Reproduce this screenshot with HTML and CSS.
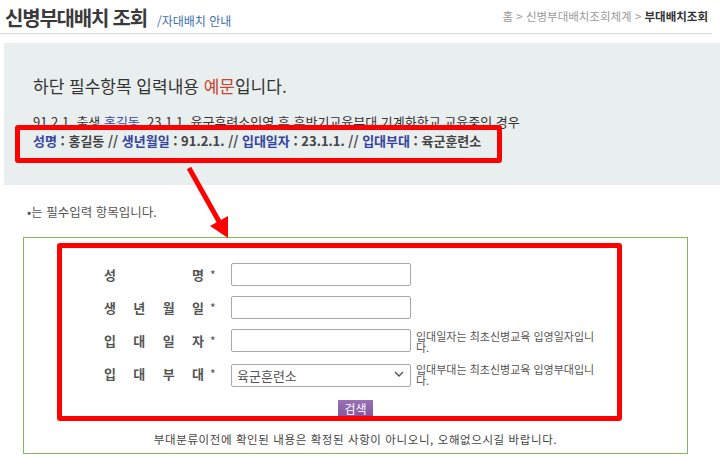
FILE: index.html
```html
<!DOCTYPE html>
<html lang="ko">
<head>
<meta charset="utf-8">
<title>신병부대배치 조회</title>
<link rel="stylesheet" href="styles.css">
</head>
<body>
<header class="top">
  <div class="title-group">
    <h1 class="title">신병부대배치 조회</h1>
    <span class="subtitle">/자대배치 안내</span>
  </div>
  <nav class="crumbs">홈 &gt; 신병부대배치조회체계 &gt; <b>부대배치조회</b></nav>
</header>

<section class="example">
  <p class="ex-title">하단 필수항목 입력내용 <span class="red">예문</span>입니다.</p>
  <p class="ex-line">91.2.1. 출생 <span class="ul"><span class="blue">홍길동</span>, 23.1.1. 육군훈련소입영</span> 후 후반기교육부대 기계화학교 교육중인 경우</p>
  <p class="ex-line ex-bold"><span class="lab">성명</span> : 홍길동 // <span class="lab">생년월일</span> : 91.2.1. // <span class="lab">입대일자</span> : 23.1.1. // <span class="lab">입대부대</span> : 육군훈련소</p>
</section>

<p class="note">•는 필수입력 항목입니다.</p>

<section class="formbox">
  <div class="row">
    <div class="label"><span>성</span><span>명</span></div>
    <span class="star">*</span>
    <input class="field" type="text">
  </div>
  <div class="row">
    <div class="label"><span>생</span><span>년</span><span>월</span><span>일</span></div>
    <span class="star">*</span>
    <input class="field" type="text">
  </div>
  <div class="row">
    <div class="label"><span>입</span><span>대</span><span>일</span><span>자</span></div>
    <span class="star">*</span>
    <input class="field" type="text">
    <p class="help">입대일자는 최초신병교육 입영일자입니다.</p>
  </div>
  <div class="row">
    <div class="label"><span>입</span><span>대</span><span>부</span><span>대</span></div>
    <span class="star">*</span>
    <div class="selwrap">
      <select class="field sel"><option>육군훈련소</option></select>
      <svg class="chev" width="10" height="6" viewBox="0 0 10 6"><path d="M1 1 L5 5 L9 1" fill="none" stroke="#555" stroke-width="1.4"/></svg>
    </div>
    <p class="help">입대부대는 최초신병교육 입영부대입니다.</p>
  </div>
  <div class="btnrow"><button class="btn" type="button">검색</button></div>
  <p class="foot">부대분류이전에 확인된 내용은 확정된 사항이 아니오니, 오해없으시길 바랍니다.</p>
</section>

<div class="mark mark-1"></div>
<div class="mark mark-2"></div>
<svg class="arrow" width="720" height="466" viewBox="0 0 720 466">
  <line x1="189" y1="168" x2="221" y2="225" stroke="#f00" stroke-width="5"/>
  <polygon points="228,238 210,226 228,216" fill="#f00"/>
</svg>
</body>
</html>
```

FILE: styles.css
```css
* { box-sizing: border-box; }

body {
  margin: 0;
  position: relative;
  width: 720px;
  height: 466px;
  overflow: hidden;
  background: #fff;
  font-family: "Noto Sans CJK KR", "Noto Sans", sans-serif;
  color: #333;
}

p { margin: 0; }

.top {
  display: flex;
  justify-content: space-between;
  align-items: center;
  width: 712px;
  height: 34px;
  padding: 2px 4px 0 5px;
  border-bottom: 1px solid #dedede;
  box-shadow: 0 1px 1px rgba(0,0,0,0.04);
}

.title-group {
  display: flex;
  align-items: baseline;
  gap: 10px;
}

.title {
  margin: 0;
  font-size: 20px;
  line-height: 26px;
  font-weight: 700;
  letter-spacing: -1.2px;
  color: #3a3a3a;
}

.subtitle {
  font-size: 12px;
  color: #3b6fb0;
}

.crumbs {
  font-size: 11.5px;
  color: #9a9a9a;
  margin-top: -4px;
}
.crumbs b { color: #333; }

.example {
  margin: 9px 0 0 4px;
  height: 142px;
  background: #e9eeee;
  padding: 32px 0 0 29px;
}

.ex-title {
  font-size: 17px;
  line-height: 22px;
  color: #333;
  margin-bottom: 15px;
}

.red { color: #c8452f; }

.ex-line {
  font-size: 13px;
  line-height: 19px;
  color: #333;
}
.ex-bold { font-weight: 700; color: #444; }

.blue { color: #3346a6; }
.ul { text-decoration: underline; }
.lab { color: #34449f; }

.note {
  margin: 20px 0 0 27px;
  font-size: 12.5px;
  line-height: 14px;
  color: #555;
}

.formbox {
  margin: 18px 0 0 23px;
  width: 665px;
  height: 217px;
  border: 1px solid #86b95b;
  padding: 25px 0 0 80px;
  display: flex;
  flex-direction: column;
  gap: 10px;
}

.row {
  display: flex;
  align-items: center;
  height: 23px;
}

.label {
  display: flex;
  justify-content: space-between;
  width: 100px;
  font-size: 13px;
  font-weight: 700;
  color: #555;
}

.star {
  width: 27px;
  padding-left: 6px;
  font-size: 12px;
  color: #555;
}

.field {
  width: 180px;
  height: 23px;
  margin: 0;
  border: 1px solid #a8a8a8;
  border-radius: 2px;
  background: #fff;
  font-family: inherit;
}

.selwrap {
  position: relative;
  width: 180px;
  height: 23px;
}

.sel {
  appearance: none;
  -webkit-appearance: none;
  padding: 0 0 0 5px;
  font-size: 13px;
  color: #555;
}

.chev {
  position: absolute;
  right: 7px;
  top: 9px;
}

.help {
  margin-left: 5px;
  width: 182px;
  font-size: 11px;
  line-height: 11px;
  color: #555;
  padding-top: 2px;
}

.btnrow {
  display: flex;
  justify-content: center;
  margin: 5px 0 0 -80px;
}

.btn {
  width: 35px;
  height: 18px;
  padding: 0;
  border: none;
  background: linear-gradient(#9a70b6, #7f559d);
  color: #fff;
  font-family: inherit;
  font-size: 12px;
  line-height: 18px;
}

.foot {
  margin: 3px 0 0 -80px;
  text-align: center;
  font-size: 11.5px;
  line-height: 16px;
  letter-spacing: 0.6px;
  color: #444;
}

.mark {
  position: absolute;
  border: 5px solid #ff0000;
  border-radius: 3px;
}
.mark-1 { left: 15px; top: 125px; width: 487px; height: 38px; }
.mark-2 { left: 57px; top: 243px; width: 565px; height: 178px; }

.arrow {
  position: absolute;
  left: 0;
  top: 0;
  pointer-events: none;
}
```
